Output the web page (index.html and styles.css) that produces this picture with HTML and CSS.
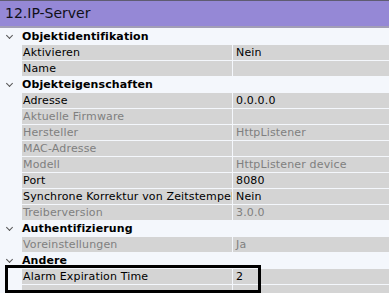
FILE: index.html
```html
<html>
    <head>
       <link rel="stylesheet" href="styles.css">
    </head>
    <body>
       <div class="panel">
          <div class="title">12.IP-Server</div>
          <div class="grid">
             <div class="group"><span class="chev"></span>Objektidentifikation</div>
             <div class="row"><div class="name">Aktivieren</div><div class="val">Nein</div></div>
             <div class="row"><div class="name">Name</div><div class="val"></div></div>

             <div class="group"><span class="chev"></span>Objekteigenschaften</div>
             <div class="row"><div class="name">Adresse</div><div class="val">0.0.0.0</div></div>
             <div class="row off"><div class="name">Aktuelle Firmware</div><div class="val"></div></div>
             <div class="row off"><div class="name">Hersteller</div><div class="val">HttpListener</div></div>
             <div class="row off"><div class="name">MAC-Adresse</div><div class="val"></div></div>
             <div class="row off"><div class="name">Modell</div><div class="val">HttpListener device</div></div>
             <div class="row"><div class="name">Port</div><div class="val">8080</div></div>
             <div class="row"><div class="name">Synchrone Korrektur von Zeitstempel</div><div class="val">Nein</div></div>
             <div class="row off"><div class="name">Treiberversion</div><div class="val">3.0.0</div></div>

             <div class="group"><span class="chev"></span>Authentifizierung</div>
             <div class="row off"><div class="name">Voreinstellungen</div><div class="val">Ja</div></div>

             <div class="group"><span class="chev"></span>Andere</div>
             <div class="row"><div class="name">Alarm Expiration Time</div><div class="val">2</div></div>
             <div class="row"><div class="name"></div><div class="val"></div></div>
          </div>
          <!-- highlight frame drawn over the last row -->
          <div class="mark"></div>
       </div>
    </body>
</html>
```
FILE: styles.css
```css
*
{
   margin: 0px;
   padding: 0px;
   box-sizing: border-box;
}
body
{
   font-family: "DejaVu Sans", Verdana, sans-serif;
   font-size: 11px;
   letter-spacing: 0.15px;
   color: #000;
   background-color: #f4f7fc;
   width: 389px;
   height: 293px;
   overflow: hidden;
}
.panel
{
   position: relative;
   height: 293px;
}
.title
{
   height: 28px;
   margin-bottom: 1px;
   background-color: #9588d6;
   border-top: 1px solid #5f5c72;
   border-bottom: 2px solid #a29eb6;
   padding-left: 5px;
   font-size: 14px;
   letter-spacing: 0px;
   line-height: 25px;
   color: #101018;
}
.grid
{
   display: flex;
   flex-direction: column;
}
.group
{
   height: 16px;
   line-height: 16px;
   font-weight: bold;
   letter-spacing: 0.1px;
   display: flex;
   align-items: center;
   background-color: #f4f7fc;
}
.chev
{
   width: 22px;
   height: 16px;
   position: relative;
}
.chev::before
{
   content: "";
   position: absolute;
   left: 7px;
   top: 4px;
   width: 4px;
   height: 4px;
   border-right: 1.5px solid #555;
   border-bottom: 1.5px solid #555;
   transform: rotate(45deg);
}
.row
{
   display: flex;
   height: 16px;
   padding-left: 22px;
   border-bottom: 1px solid #f4f7fc;
}
.name
{
   width: 211px;
   background-color: #d4d4d4;
   border-right: 1px solid #f4f7fc;
   padding-left: 1px;
   line-height: 15px;
   white-space: nowrap;
   overflow: hidden;
}
.val
{
   flex: 1;
   background-color: #d4d4d4;
   padding-left: 3px;
   line-height: 15px;
   white-space: nowrap;
}
.off .name, .off .val
{
   color: #7f7f7f;
}
.mark
{
   position: absolute;
   left: 5px;
   top: 265px;
   width: 256px;
   height: 28px;
   border: 3px solid #000;
}
```
